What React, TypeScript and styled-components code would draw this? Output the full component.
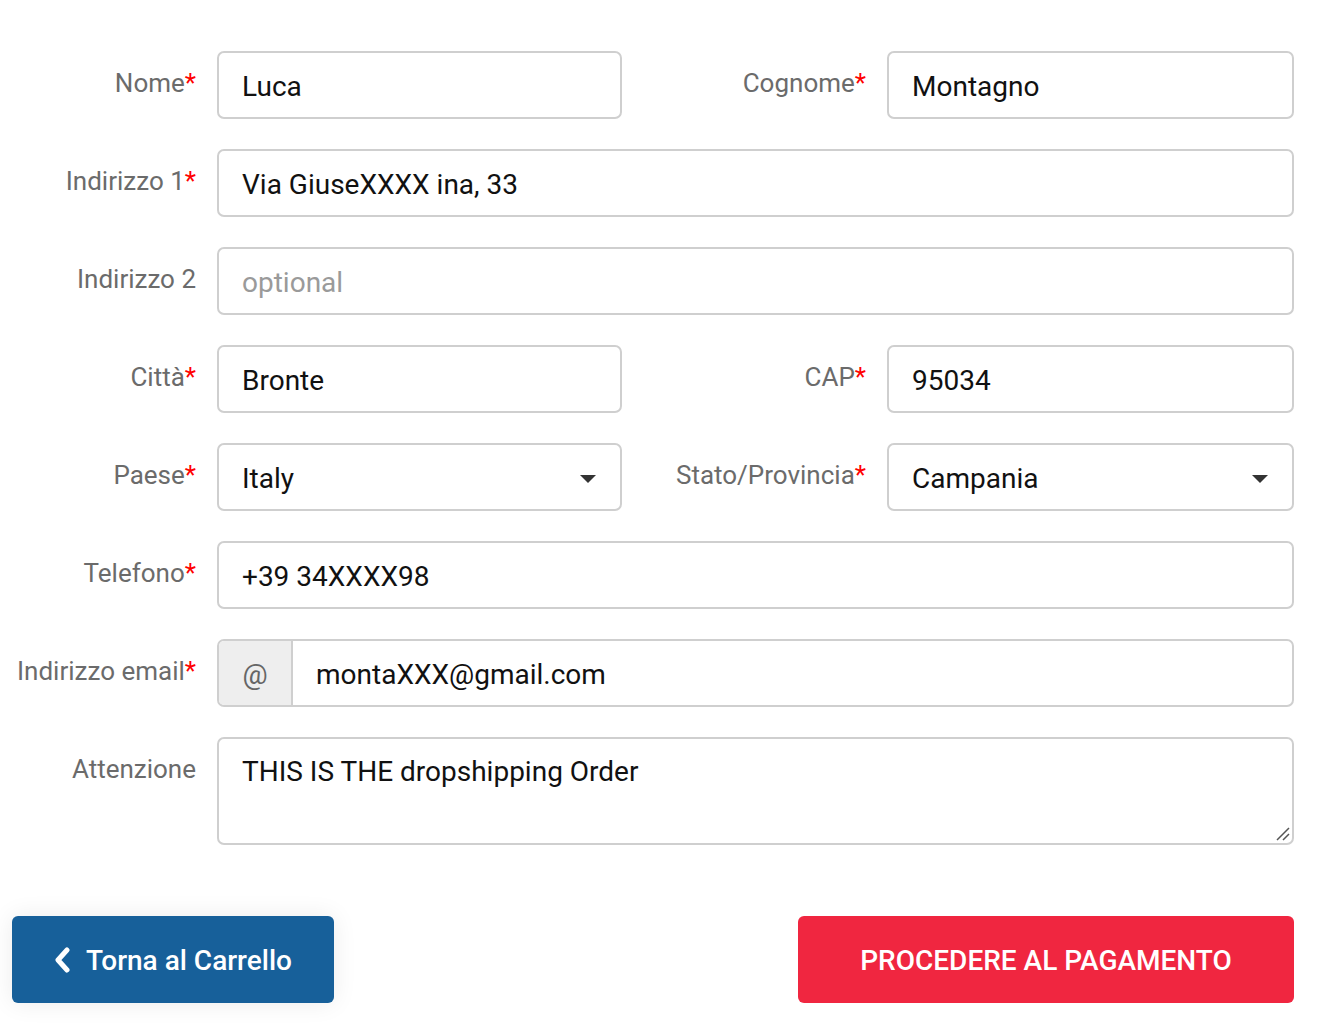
import styled, {createGlobalStyle} from "styled-components";

const GlobalStyle = createGlobalStyle`
  html, body {
    margin: 0;
    padding: 0;
    background: #fff;
    font-family: Roboto, "Liberation Sans", Arial, sans-serif;
  }
  * {
    box-sizing: border-box;
  }
`

const Page = styled.div`
  padding: 51px 26px 24px 12px;
  width: 1320px;
`

const Form = styled.div`
  display: grid;
  row-gap: 30px;
`

const Row = styled.div<{ $split?: boolean }>`
  display: grid;
  grid-template-columns: ${p => p.$split ? '205px 405px 265px 1fr' : '205px 1fr'};
  align-items: start;
`

const Label = styled.label`
  text-align: right;
  padding-right: 21px;
  padding-top: 16px;
  font-size: 26px;
  line-height: 32px;
  color: #6b6b6b;
  white-space: nowrap;
`

const Star = styled.span`
  color: #f00;
`

const Field = styled.div`
  height: 68px;
  border: 2px solid #cfcfcf;
  border-radius: 7px;
  background: #fff;
  display: flex;
  align-items: center;
  padding: 2px 23px 0;
  font-size: 28px;
  color: #111;
  position: relative;
`

const Placeholder = styled.span`
  color: #9a9a9a;
`

const Caret = styled.span`
  position: absolute;
  right: 24px;
  top: 30px;
  width: 0;
  height: 0;
  border-left: 8px solid transparent;
  border-right: 8px solid transparent;
  border-top: 8px solid #333;
`

const Group = styled.div`
  height: 68px;
  border: 2px solid #cfcfcf;
  border-radius: 7px;
  display: flex;
  overflow: hidden;
`

const Addon = styled.div`
  width: 74px;
  background: #eee;
  border-right: 2px solid #cfcfcf;
  display: flex;
  align-items: center;
  justify-content: center;
  padding-top: 2px;
  font-size: 28px;
  color: #666;
`

const GroupInput = styled.div`
  flex: 1;
  display: flex;
  align-items: center;
  padding: 2px 23px 0;
  font-size: 28px;
  color: #111;
`

const TextArea = styled.div`
  height: 108px;
  border: 2px solid #cfcfcf;
  border-radius: 7px;
  padding: 16px 23px;
  font-size: 28px;
  line-height: 34px;
  color: #111;
  position: relative;
`

const Grip = styled.svg`
  position: absolute;
  right: 2px;
  bottom: 2px;
`

const Actions = styled.div`
  display: flex;
  justify-content: space-between;
  margin-top: 71px;
`

const Button = styled.button<{ $color: string; $width: number; $shadow?: boolean }>`
  height: 87px;
  width: ${p => p.$width}px;
  border: none;
  border-radius: 6px;
  background: ${p => p.$color};
  color: #fff;
  font-family: Roboto, "Liberation Sans", Arial, sans-serif;
  font-weight: 500;
  font-size: 28px;
  display: flex;
  align-items: center;
  justify-content: center;
  gap: 14px;
  padding-top: 2px;
  box-shadow: ${p => p.$shadow ? '0 0 24px rgba(0,0,0,0.08)' : 'none'};
`

const Req = ({text}: { text: string }) => <Label>{text}<Star>*</Star></Label>

export default function App() {
    return <Page>
        <GlobalStyle/>
        <Form>
            <Row $split>
                <Req text="Nome"/>
                <Field>Luca</Field>
                <Req text="Cognome"/>
                <Field>Montagno</Field>
            </Row>
            <Row>
                <Req text="Indirizzo 1"/>
                <Field>Via GiuseXXXX ina, 33</Field>
            </Row>
            <Row>
                <Label>Indirizzo 2</Label>
                <Field><Placeholder>optional</Placeholder></Field>
            </Row>
            <Row $split>
                <Req text="Città"/>
                <Field>Bronte</Field>
                <Req text="CAP"/>
                <Field>95034</Field>
            </Row>
            <Row $split>
                <Req text="Paese"/>
                <Field>Italy<Caret/></Field>
                <Req text="Stato/Provincia"/>
                <Field>Campania<Caret/></Field>
            </Row>
            <Row>
                <Req text="Telefono"/>
                <Field>+39 34XXXX98</Field>
            </Row>
            <Row>
                <Req text="Indirizzo email"/>
                <Group>
                    <Addon>@</Addon>
                    <GroupInput>montaXXX@gmail.com</GroupInput>
                </Group>
            </Row>
            <Row>
                <Label>Attenzione</Label>
                <TextArea>
                    THIS IS THE dropshipping Order
                    <Grip width="16" height="16" viewBox="0 0 16 16">
                        <path d="M15 3 L3 15 M15 9 L9 15" stroke="#555" strokeWidth="1.5"/>
                    </Grip>
                </TextArea>
            </Row>
        </Form>
        <Actions>
            <Button $color="#17609a" $width={322} $shadow>
                <svg width="18" height="26" viewBox="0 0 18 26">
                    <path d="M13 3 L4 13 L13 23" stroke="#fff" strokeWidth="5" fill="none" strokeLinecap="round" strokeLinejoin="round"/>
                </svg>
                Torna al Carrello
            </Button>
            <Button $color="#f02640" $width={496}>PROCEDERE AL PAGAMENTO</Button>
        </Actions>
    </Page>
}
